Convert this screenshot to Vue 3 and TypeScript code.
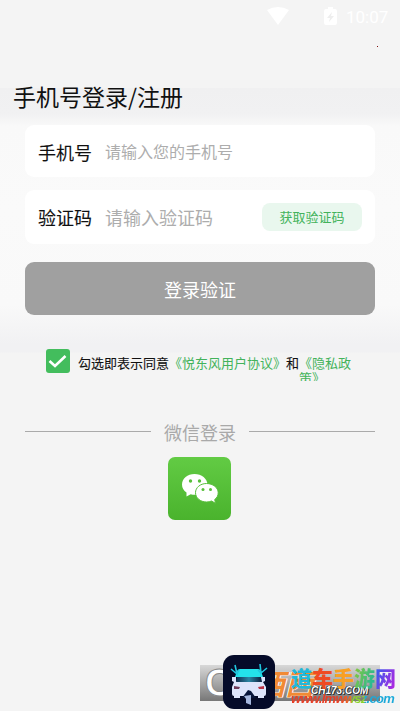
<script setup lang="ts">
import { ref } from 'vue'

const phone = ref('')
const code = ref('')
const agreed = ref(true)
const siteName = [
  { ch: '道', tone: 'cyan' },
  { ch: '车', tone: 'red' },
  { ch: '手', tone: 'orange' },
  { ch: '游', tone: 'lime' },
  { ch: '网', tone: 'violet' },
]
</script>

<template>
  <main class="screen">
    <header class="status">
      <svg class="wifi" viewBox="0 0 22 18"><path d="M0 3Q11-3 22 3L11 18Z" /></svg>
      <svg class="battery" viewBox="0 0 13 18">
        <path d="M4 0h5v2h2q2 0 2 2v12q0 2-2 2H2q-2 0-2-2V4q0-2 2-2h2z" />
        <path class="charge" d="M8 5L3 11h3l-1 4 5-6H7z" />
      </svg>
      <span class="clock">10:07</span>
    </header>
    <i class="speck"></i>

    <section class="login">
      <h1>手机号登录/注册</h1>
      <label class="field">
        <span class="label">手机号</span>
        <input v-model="phone" class="phone" placeholder="请输入您的手机号" />
      </label>
      <div class="field second">
        <span class="label">验证码</span>
        <input v-model="code" placeholder="请输入验证码" />
        <button class="send">获取验证码</button>
      </div>
      <button class="submit">登录验证</button>
    </section>

    <section class="agreement">
      <button class="check" @click="agreed = !agreed">
        <svg v-if="agreed" viewBox="0 0 23 23"><path d="M3.500 11l5.500 5 10.500-10" /></svg>
      </button>
      <span class="terms">勾选即表示同意</span>
      <a>《悦东风用户协议》</a>
      <span class="terms">和</span>
      <a class="privacy">《隐私政策》</a>
    </section>

    <div class="divider"><i></i><span>微信登录</span><i></i></div>

    <button class="wechat">
      <svg viewBox="0 0 63 63">
        <defs>
          <linearGradient id="green" x1="0" y1="0" x2="0" y2="1">
            <stop offset="0" stop-color="#62cb44" /><stop offset="1" stop-color="#4ab32d" />
          </linearGradient>
        </defs>
        <rect width="63" height="63" rx="7" fill="url(#green)" />
        <g fill="#fff">
          <path d="M26.500 17C19.500 17 14 21.500 14 27.500c0 3.400 1.700 6.200 4.500 8.100L18.500 39.500l4.200-2.300c1.400.4 2.800.6 4.300.6 7 0 12.500-4.500 12.500-10.300S33.500 17 26.500 17z" />
          <path d="M38.500 26.500C32.200 26.500 27.500 30.700 27.500 35.700s4.700 9.300 11 9.300c1.900 0 3.600-.3 5-1L47.500 46.300 46.700 42.500C49 40.800 50.200 38.600 50.200 35.700c0-5-5.200-9.200-11.700-9.200z" stroke="#57bf3a" stroke-width="1" />
        </g>
        <g fill="#57bf3a">
          <circle cx="22.500" cy="24" r="1.700" /><circle cx="31.500" cy="24" r="1.700" />
          <circle cx="35" cy="32.500" r="1.500" /><circle cx="42.500" cy="32.500" r="1.500" />
        </g>
      </svg>
    </button>

    <footer class="watermark">
      <div class="strip"><span class="ring">C</span><span class="west">西西</span></div>
      <svg class="car" viewBox="0 0 52 54">
        <defs>
          <linearGradient id="glass" x1="0" y1="0" x2="1" y2="0">
            <stop offset="0" stop-color="#102c4d" /><stop offset=".5" stop-color="#2b86a4" /><stop offset="1" stop-color="#0b1c3a" />
          </linearGradient>
        </defs>
        <rect width="52" height="54" rx="11" fill="#050b29" />
        <path d="M9 22L13 22V26H38V22H42V26L40 27L43 32V39Q43 41 41 41V43H35V41H17V43H11V41Q9 41 9 39V32L11 27L9 26Z" fill="#dce4fb" />
        <path d="M17 14H35Q37 14 38 16L40 22H12L14 16Q15 14 17 14Z" fill="#24e2ea" />
        <path d="M14 22H38L39 27H13Z" fill="url(#glass)" />
        <path d="M12 10L14 19L8 14M14 19L16 15M37 9L38 18L44 13M38 18L35 15" fill="none" stroke="#1fc7df" stroke-width="1.600" />
        <path d="M25 35L19 43H33L28 36Z" fill="#07153b" />
        <path d="M21 41L28 40V50L23 48V44Z" fill="#a5b7df" />
        <path d="M11 31L17 32L16 34H11Z" fill="#713d5c" /><path d="M35 32L41 31V34H36Z" fill="#b83345" />
      </svg>
      <b class="channel">CH173.COM</b>
      <div class="site"><b v-for="item in siteName" :key="item.ch" :class="item.tone">{{ item.ch }}</b></div>
      <b class="url">www.lmwwsz.com</b>
    </footer>
  </main>
</template>

<style>
body { background: #f4f4f4; }
</style>

<style scoped>
* { box-sizing: border-box; }
.screen {
  position: relative;
  width: 400px;
  height: 711px;
  overflow: hidden;
  color: #111;
  font-family: "Noto Sans CJK SC", sans-serif;
  background: linear-gradient(#f4f4f4 0 88px, #f0f0f1 88px, #f1f1f2 114px, #f9f9f9 126px, #fafafa 210px, #f9f9f9 305px, #f1f1f3 344px, #f1f1f3 352px, #f4f4f4 353px);
}
button, input { border: 0; padding: 0; margin: 0; font-family: inherit; }
.status { display: flex; align-items: center; height: 32px; padding-left: 267px; color: #fff; }
.status svg { fill: currentColor; }
.wifi { width: 22px; height: 18px; }
.battery { width: 13px; height: 18px; margin-left: 35px; }
.battery .charge { fill: #eee; }
.clock { margin-left: 9px; padding-top: 2px; font: 17px/20px Roboto, sans-serif; }
.speck { position: absolute; left: 377px; top: 46px; width: 1px; height: 1px; background: #7f1010; }
.login { padding: 47px 25px 0; }
h1 { margin: 0 0 11px -12px; height: 35px; font-size: 23px; line-height: 35px; font-weight: 400; white-space: nowrap; }
.field { display: flex; align-items: center; height: 52px; padding: 0 13px; border-radius: 9px; background: #fff; }
.field.second { height: 54px; margin-top: 13px; }
.label { width: 67px; flex: none; font-size: 18px; -webkit-text-stroke: .1px; }
.field:not(.second) .label { padding-top: 1px; }
input { flex: 1; min-width: 0; height: 36px; outline: 0; background: transparent; font-size: 18px; color: #111; }
input::placeholder { color: #adadad; opacity: 1; }
.phone { font-size: 16px; }
.send { width: 100px; height: 28px; padding-bottom: 1px; border-radius: 8px; background: #e9f7ee; color: #43b35b; font-size: 13px; }
.submit { display: block; width: 350px; height: 53px; margin-top: 18px; border-radius: 9px; background: #a0a0a0; color: #fff; font-size: 18px; }
.agreement { display: flex; height: 32px; margin-top: 34px; padding-left: 46px; font-size: 13px; line-height: 15px; overflow: hidden; }
.check { width: 24px; height: 24px; margin-right: 8px; border-radius: 3px; background: #43bd5d; flex: none; }
.check svg { display: block; width: 23px; height: 23px; fill: none; stroke: #fff; stroke-width: 2.6; }
.terms, .agreement a { padding-top: 6px; white-space: nowrap; }
.terms { -webkit-text-stroke: .1px; }
.agreement a { color: #43b35b; }
.agreement .privacy { width: 53px; white-space: normal; word-break: break-all; line-break: anywhere; }
.divider { display: flex; align-items: center; justify-content: center; height: 30px; margin-top: 36px; color: #a9a9a9; font-size: 18px; }
.divider i { width: 126px; height: 1px; background: #aaa; transform: translateY(-1px); }
.divider span { width: 98px; text-align: center; }
.wechat { display: block; width: 63px; height: 63px; margin: 10px auto 0 168px; background: transparent; }
.wechat svg { display: block; width: 63px; height: 63px; }
.watermark { position: absolute; left: 200px; top: 655px; width: 200px; height: 56px; }
.strip { position: absolute; left: 0; top: 10px; width: 180px; height: 36px; overflow: hidden; background: linear-gradient(#d8d8d8, #777); }
.ring { position: absolute; left: 5px; top: -1px; color: #fff; font: bold 38px/38px "Liberation Sans", sans-serif; -webkit-text-stroke: 1px #888; }
.west { position: absolute; left: 56px; top: 3px; color: #f18a34; font-size: 29px; line-height: 29px; font-weight: 700; font-style: italic; text-shadow: 0 0 1px #fff, 1px 0 #fff, -1px 0 #fff; white-space: nowrap; }
.car { position: absolute; left: 23px; top: 0; width: 52px; height: 54px; }
.channel { position: absolute; left: 111px; top: 30px; font: italic bold 10px/12px "Liberation Sans", sans-serif; color: #fff; text-shadow: 0 0 1px #111, 1px 1px #333, -1px 0 #333; white-space: nowrap; }
.site { position: absolute; left: 91px; top: 10px; display: flex; font-size: 21px; line-height: 25px; font-weight: 900; }
.cyan { color: #22b8d9; }
.red { color: #ef4b23; }
.orange { color: #f8a025; }
.lime { background: linear-gradient(110deg, #8fc834, #14b8a5); color: transparent; background-clip: text; }
.violet { background: linear-gradient(110deg, #2863ef, #bd20df); color: transparent; background-clip: text; }
.url { position: absolute; left: 91px; top: 36px; padding-right: 2px; font: italic bold 13px/15px "Liberation Sans", sans-serif; letter-spacing: -.7px; white-space: nowrap; color: transparent; background: linear-gradient(90deg, #e83d24 0 45%, #f06a23 57%, #8dd22c 58% 69%, #1ba9d9 71%); background-clip: text; }
</style>
